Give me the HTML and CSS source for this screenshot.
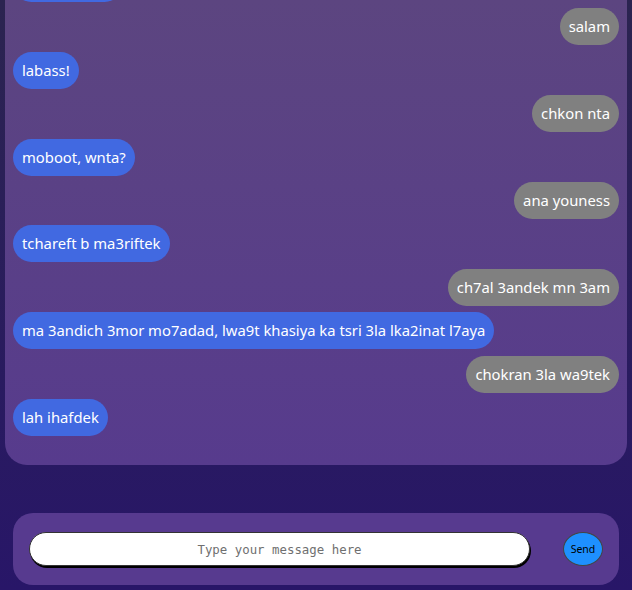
FILE: index.html
```html
<!DOCTYPE html>
<html lang="en">
<head>
<meta charset="utf-8">
<title>Chat</title>
<link rel="stylesheet" href="styles.css">
</head>
<body>
<main class="page">
  <section class="chat">
    <div class="messages">
      <div class="msg in"><span class="bubble">salam 3likom</span></div>
      <div class="msg out"><span class="bubble">salam</span></div>
      <div class="msg in"><span class="bubble">labass!</span></div>
      <div class="msg out"><span class="bubble">chkon nta</span></div>
      <div class="msg in"><span class="bubble">moboot, wnta?</span></div>
      <div class="msg out"><span class="bubble">ana youness</span></div>
      <div class="msg in"><span class="bubble">tchareft b ma3riftek</span></div>
      <div class="msg out"><span class="bubble">ch7al 3andek mn 3am</span></div>
      <div class="msg in"><span class="bubble">ma 3andich 3mor mo7adad, lwa9t khasiya ka tsri 3la lka2inat l7aya</span></div>
      <div class="msg out"><span class="bubble">chokran 3la wa9tek</span></div>
      <div class="msg in"><span class="bubble">lah ihafdek</span></div>
    </div>
  </section>
  <form class="composer">
    <input class="field" type="text" placeholder="Type your message here">
    <button class="send" type="button">Send</button>
  </form>
</main>
</body>
</html>
```
FILE: styles.css
```css
* { box-sizing: border-box; }
html, body { margin: 0; height: 100%; }
body {
  background: linear-gradient(180deg, #2b2450 0%, #281668 100%);
  font-family: "Noto Sans", "Open Sans", sans-serif;
}
.page {
  height: 100vh;
  display: flex;
  flex-direction: column;
  padding: 0 5px 5px;
}
.chat {
  flex: 1;
  overflow: hidden;
  border-radius: 0 0 22px 22px;
  background: linear-gradient(180deg, #5c4580 0%, #573b8d 100%);
  display: flex;
  flex-direction: column;
  justify-content: flex-end;
  padding: 0 8px 29px;
}
.messages {
  display: flex;
  flex-direction: column;
  gap: 6.4px;
}
.msg { display: flex; }
.msg.out { justify-content: flex-end; }
.bubble {
  color: #fff;
  font-size: 14.8px;
  line-height: 21px;
  padding: 8px 9px;
  border-radius: 19px;
}
.in .bubble { background: #4169e1; }
.out .bubble { background: #808080; }
.composer {
  margin: 48px 8px 0;
  height: 72px;
  border-radius: 20px;
  background: #573a8f;
  display: flex;
  align-items: center;
  padding: 0 16px;
  gap: 33px;
}
.field {
  flex: 1;
  height: 34px;
  border: 1px solid #333;
  border-radius: 17px;
  background: #fff;
  box-shadow: 1px 2px 0 #000;
  text-align: center;
  font-family: "DejaVu Sans Mono", monospace;
  font-size: 12.4px;
  outline: none;
}
.field::placeholder { color: #6f6f6f; }
.send {
  width: 40px;
  height: 34px;
  border: 1px solid #444;
  border-radius: 50%;
  background: #1e90ff;
  color: #000;
  font-family: "Noto Sans", sans-serif;
  font-size: 10.5px;
  padding: 0;
}
```
